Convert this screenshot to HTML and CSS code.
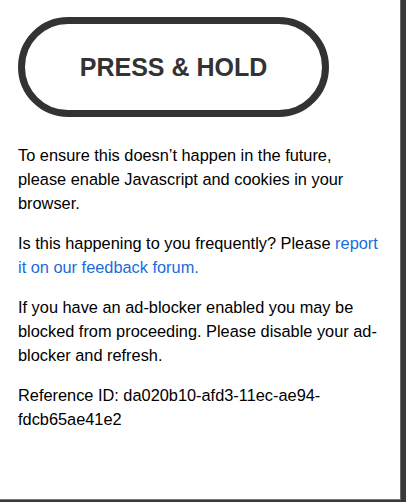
FILE: index.html
```html
<!DOCTYPE html>
<html lang="en">
<head>
<meta charset="utf-8">
<title>Press &amp; Hold</title>
<link rel="stylesheet" href="styles.css">
</head>
<body>
<div class="panel">
  <div class="hold-btn">PRESS &amp; HOLD</div>
  <div class="content">
    <p>To ensure this doesn’t happen in the future, please enable Javascript and cookies in your browser.</p>
    <p>Is this happening to you frequently? Please <a href="#" class="link">report it on our feedback forum.</a></p>
    <p>If you have an ad-blocker enabled you may be blocked from proceeding. Please disable your ad-blocker and refresh.</p>
    <p>Reference ID: da020b10-afd3-11ec-ae94-fdcb65ae41e2</p>
  </div>
</div>
</body>
</html>
```
FILE: styles.css
```css
html, body {
  margin: 0;
  padding: 0;
}
body {
  background: #3a3a3a;
  width: 406px;
  height: 502px;
  overflow: hidden;
}
.panel {
  width: 400px;
  height: 482px;
  background: #ffffff;
  border-right: 1px solid #6a6a6a;
  border-bottom: 1px solid #7a7a7a;
  padding-top: 17px;
  box-sizing: content-box;
  display: flex;
  flex-direction: column;
}
.hold-btn {
  margin-left: 18px;
  width: 311px;
  height: 100px;
  box-sizing: border-box;
  border: 7px solid #333333;
  border-radius: 50px;
  display: flex;
  align-items: center;
  justify-content: center;
  font-family: "Liberation Sans", Arial, sans-serif;
  font-weight: bold;
  font-size: 25px;
  color: #333333;
}
.content {
  padding: 26px 18px 0 18px;
  font-family: "Liberation Sans", Arial, sans-serif;
  font-size: 16.35px;
  line-height: 24px;
  color: #000000;
}
.content p {
  margin: 0 0 16px 0;
}
.link {
  color: #1a6bdc;
  text-decoration: none;
}
```
